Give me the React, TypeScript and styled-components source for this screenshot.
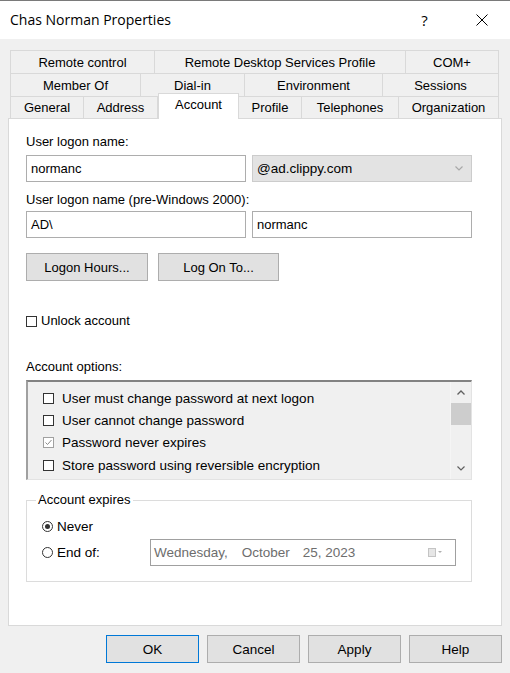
import React from 'react';
import styled, { createGlobalStyle, css } from 'styled-components';

const GlobalStyle = createGlobalStyle`
    * { box-sizing: border-box; }
    body {
        margin: 0;
        background: #f0f0f0;
        font-family: "Liberation Sans", Arial, sans-serif;
        font-size: 13px;
        color: #000;
    }
`;

const Window = styled.div`
    width: 510px;
    height: 673px;
    display: flex;
    flex-direction: column;
    background: #f0f0f0;
`;

const TitleBar = styled.div`
    height: 39px;
    display: flex;
    align-items: center;
    background: #fff;
    border-top: 1px solid #7a7a7a;
    padding-left: 10px;
`;

const Title = styled.div`
    flex: 1;
    font-family: "Open Sans", "Noto Sans", sans-serif;
    font-size: 14px;
    padding-bottom: 1px;
`;

const TitleButton = styled.div`
    width: 57px;
    height: 100%;
    display: flex;
    align-items: center;
    justify-content: center;
    font-family: "Open Sans", sans-serif;
    font-size: 15px;
`;

const Body = styled.div`
    padding: 11px 8px 0;
    display: flex;
    flex-direction: column;
`;

const TabStack = styled.div`
    padding: 0 3px 0 2px;
    display: flex;
    flex-direction: column;
`;

const TabRow = styled.div<{ $h: number }>`
    display: flex;
    align-items: flex-start;
    height: ${(p) => p.$h}px;
`;

const Tab = styled.div<{ $w: number; $active?: boolean }>`
    width: ${(p) => p.$w}px;
    height: 100%;
    border: 1px solid #d9d9d9;
    border-bottom: none;
    border-left: none;
    background: #f0f0f0;
    display: flex;
    align-items: center;
    justify-content: center;
    white-space: nowrap;
    &:first-child {
        border-left: 1px solid #d9d9d9;
    }
    ${(p) =>
        p.$active &&
        css`
            position: relative;
            z-index: 1;
            height: calc(100% + 4px);
            margin-top: -3px;
            margin-bottom: -1px;
            background: #fff;
            border-left: 1px solid #d9d9d9;
            padding-bottom: 4px;
        `}
`;

const Panel = styled.div`
    height: 508px;
    background: #fff;
    border: 1px solid #d9d9d9;
    padding: 15px 29px 0 17px;
    display: flex;
    flex-direction: column;
`;

const Label = styled.div<{ $mt?: number }>`
    line-height: 16px;
    margin-top: ${(p) => p.$mt ?? 0}px;
`;

const FieldRow = styled.div<{ $mt: number }>`
    display: flex;
    gap: 6px;
    margin-top: ${(p) => p.$mt}px;
`;

const TextBox = styled.div`
    width: 220px;
    height: 27px;
    border: 1px solid #adadad;
    background: #fff;
    display: flex;
    align-items: center;
    padding-left: 4px;
`;

const Combo = styled(TextBox)`
    background: #e3e3e3;
    border-color: #cccccc;
    justify-content: space-between;
    padding: 0 8px 0 4px;
    font-size: 13.5px;
`;

const ButtonRow = styled.div<{ $mt: number }>`
    display: flex;
    gap: 10px;
    margin-top: ${(p) => p.$mt}px;
`;

const Button = styled.div<{ $w: number; $default?: boolean }>`
    width: ${(p) => p.$w}px;
    height: 28px;
    background: #e1e1e1;
    border: 1px solid ${(p) => (p.$default ? '#0078d7' : '#adadad')};
    display: flex;
    align-items: center;
    justify-content: center;
`;

const CheckLine = styled.div<{ $mt: number }>`
    display: flex;
    align-items: center;
    gap: 4px;
    line-height: 16px;
    margin-top: ${(p) => p.$mt}px;
`;

const Box = styled.span<{ $muted?: boolean }>`
    width: 11px;
    height: 11px;
    border: 1px solid ${(p) => (p.$muted ? '#a0a0a0' : '#333')};
    background: #fff;
    display: inline-flex;
    align-items: center;
    justify-content: center;
    flex: none;
`;

const ListBox = styled.div`
    margin-top: 5px;
    width: 446px;
    height: 100px;
    background: #f0f0f0;
    border-top: 2px solid #828282;
    border-left: 2px solid #a0a0a0;
    border-right: 1px solid #e3e3e3;
    border-bottom: 1px solid #e3e3e3;
    display: flex;
`;

const ListItems = styled.div`
    flex: 1;
    padding: 5px 0 0 15px;
    display: flex;
    flex-direction: column;
`;

const ListItem = styled.div`
    height: 22.4px;
    display: flex;
    align-items: center;
    gap: 8px;
    font-size: 13.5px;
`;

const ScrollBar = styled.div`
    width: 21px;
    display: flex;
    flex-direction: column;
    align-items: center;
    background: #f0f0f0;
    border-left: 1px solid #f5f5f5;
`;

const ScrollArrow = styled.div`
    height: 21px;
    width: 100%;
    display: flex;
    align-items: center;
    justify-content: center;
`;

const Thumb = styled.div`
    width: 20px;
    height: 22px;
    background: #cdcdcd;
`;

const ScrollTrack = styled.div`
    flex: 1;
`;

const Group = styled.fieldset`
    margin: 12px 0 0;
    width: 446px;
    height: 90px;
    border: 1px solid #dcdcdc;
    padding: 0 15px 0 15px;
    display: flex;
    flex-direction: column;
`;

const Legend = styled.legend`
    padding: 0 2px;
    margin-left: -6px;
    line-height: 16px;
`;

const RadioLine = styled.div<{ $mt: number }>`
    display: flex;
    align-items: center;
    margin-top: ${(p) => p.$mt}px;
    height: 27px;
`;

const RadioLabel = styled.label`
    width: 108px;
    display: flex;
    align-items: center;
    gap: 4px;
    font-size: 13.5px;
`;

const Radio = styled.span<{ $on?: boolean }>`
    width: 11px;
    height: 11px;
    border-radius: 50%;
    border: 1px solid #333;
    background: #fff;
    display: inline-flex;
    align-items: center;
    justify-content: center;
    &::after {
        content: '';
        width: 5px;
        height: 5px;
        border-radius: 50%;
        background: ${(p) => (p.$on ? '#333' : 'transparent')};
    }
`;

const DatePicker = styled.div`
    width: 306px;
    height: 27px;
    border: 1px solid #a0a0a0;
    display: flex;
    align-items: center;
    padding: 0 12px 0 3px;
    color: #6d6d6d;
    font-size: 13.5px;
`;

const DatePart = styled.span<{ $gap?: number }>`
    margin-right: ${(p) => p.$gap ?? 0}px;
`;

const Spacer = styled.span`
    flex: 1;
`;

const Footer = styled.div`
    display: flex;
    justify-content: flex-end;
    gap: 8px;
    margin-top: 9px;
    font-size: 13.5px;
`;

const ChevronDown = ({ color = '#808080' }: { color?: string }) => (
    <svg width="8" height="5" viewBox="0 0 8 5">
        <path d="M0.5 0.5 L4 4 L7.5 0.5" fill="none" stroke={color} strokeWidth="1.2" />
    </svg>
);

const ChevronUp = () => (
    <svg width="8" height="5" viewBox="0 0 8 5">
        <path d="M0.5 4.5 L4 1 L7.5 4.5" fill="none" stroke="#606060" strokeWidth="1.3" />
    </svg>
);

const CheckMark = () => (
    <svg width="9" height="9" viewBox="0 0 9 9">
        <path d="M1.5 4.5 L3.5 6.5 L7.5 2" fill="none" stroke="#8a8a8a" strokeWidth="1" />
    </svg>
);

const CloseIcon = () => (
    <svg width="12" height="12" viewBox="0 0 12 12">
        <path d="M0.5 0.5 L11.5 11.5 M11.5 0.5 L0.5 11.5" stroke="#000" strokeWidth="1" />
    </svg>
);

const CalendarIcon = () => (
    <svg width="15" height="9" viewBox="0 0 15 9">
        <rect x="0.5" y="0.5" width="7" height="8" fill="#e6e6e6" stroke="#c4c4c4" />
        <path d="M10 3 L14 3 L12 5 Z" fill="#b0b0b0" />
    </svg>
);

const rows: { h: number; tabs: [string, number][] }[] = [
    { h: 23, tabs: [['Remote control', 145], ['Remote Desktop Services Profile', 251], ['COM+', 93]] },
    { h: 23, tabs: [['Member Of', 131], ['Dial-in', 104], ['Environment', 138], ['Sessions', 116]] },
    {
        h: 22,
        tabs: [
            ['General', 74],
            ['Address', 74],
            ['Account', 81],
            ['Profile', 63],
            ['Telephones', 97],
            ['Organization', 100],
        ],
    },
];

const options = [
    { text: 'User must change password at next logon', checked: false },
    { text: 'User cannot change password', checked: false },
    { text: 'Password never expires', checked: true },
    { text: 'Store password using reversible encryption', checked: false },
];

export default function App() {
    return (
        <Window>
            <GlobalStyle />
            <TitleBar>
                <Title>Chas Norman Properties</Title>
                <TitleButton>?</TitleButton>
                <TitleButton>
                    <CloseIcon />
                </TitleButton>
            </TitleBar>
            <Body>
                <TabStack>
                    {rows.map((row, i) => (
                        <TabRow key={i} $h={row.h}>
                            {row.tabs.map(([name, w]) => (
                                <Tab key={name} $w={w} $active={name === 'Account'}>
                                    {name}
                                </Tab>
                            ))}
                        </TabRow>
                    ))}
                </TabStack>
                <Panel>
                    <Label>User logon name:</Label>
                    <FieldRow $mt={5}>
                        <TextBox>normanc</TextBox>
                        <Combo>
                            <span>@ad.clippy.com</span>
                            <ChevronDown color="#a8a8a8" />
                        </Combo>
                    </FieldRow>
                    <Label $mt={10}>User logon name (pre-Windows 2000):</Label>
                    <FieldRow $mt={3}>
                        <TextBox>AD\</TextBox>
                        <TextBox>normanc</TextBox>
                    </FieldRow>
                    <ButtonRow $mt={15}>
                        <Button $w={122}>Logon Hours...</Button>
                        <Button $w={121}>Log On To...</Button>
                    </ButtonRow>
                    <CheckLine $mt={32}>
                        <Box />
                        Unlock account
                    </CheckLine>
                    <Label $mt={30}>Account options:</Label>
                    <ListBox>
                        <ListItems>
                            {options.map((o) => (
                                <ListItem key={o.text}>
                                    <Box $muted={o.checked}>{o.checked && <CheckMark />}</Box>
                                    {o.text}
                                </ListItem>
                            ))}
                        </ListItems>
                        <ScrollBar>
                            <ScrollArrow>
                                <ChevronUp />
                            </ScrollArrow>
                            <Thumb />
                            <ScrollTrack />
                            <ScrollArrow>
                                <ChevronDown color="#606060" />
                            </ScrollArrow>
                        </ScrollBar>
                    </ListBox>
                    <Group>
                        <Legend>Account expires</Legend>
                        <RadioLine $mt={5}>
                            <RadioLabel>
                                <Radio $on />
                                Never
                            </RadioLabel>
                        </RadioLine>
                        <RadioLine $mt={-1}>
                            <RadioLabel>
                                <Radio />
                                End of:
                            </RadioLabel>
                            <DatePicker>
                                <DatePart $gap={14}>Wednesday,</DatePart>
                                <DatePart $gap={13}>October</DatePart>
                                <DatePart>25, 2023</DatePart>
                                <Spacer />
                                <CalendarIcon />
                            </DatePicker>
                        </RadioLine>
                    </Group>
                </Panel>
                <Footer>
                    <Button $w={93} $default>
                        OK
                    </Button>
                    <Button $w={93}>Cancel</Button>
                    <Button $w={93}>Apply</Button>
                    <Button $w={93}>Help</Button>
                </Footer>
            </Body>
        </Window>
    );
}
